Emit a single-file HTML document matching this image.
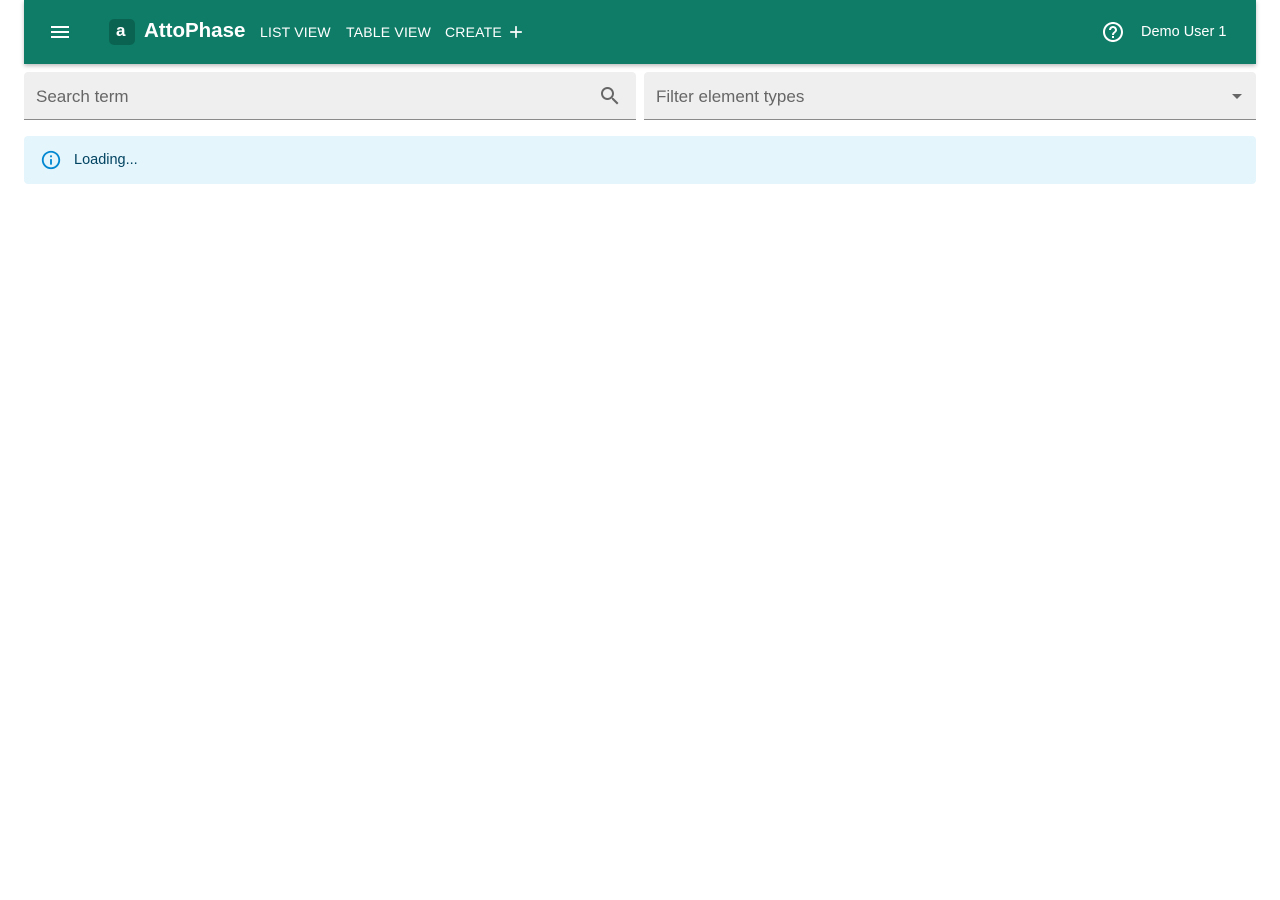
<!DOCTYPE html>
<html><head><style>
body{margin:0;background:#fff;font-family:"Liberation Sans",sans-serif;}
.bar{position:absolute;left:24px;top:0;width:1232px;height:64px;background:#0e7c67;box-shadow:0 2px 4px rgba(0,0,0,.25);color:#fff;}
.bar *{position:absolute}
.nav{font-size:14px;font-weight:500;top:24px;letter-spacing:.2px}
.field{position:absolute;top:72px;height:47px;background:#efefef;border-bottom:1px solid #8a8a8a;border-radius:4px 4px 0 0;width:612px}
.field span{position:absolute;left:12px;top:15px;font-size:17px;color:#666}
.alert{position:absolute;left:24px;top:136px;width:1232px;height:48px;background:#e4f5fc;border-radius:4px}
</style></head><body>
<div class="bar">
<svg style="left:24px;top:20px" width="24" height="24" viewBox="0 0 24 24"><path d="M3 18h18v-2H3v2zm0-5h18v-2H3v2zm0-7v2h18V6H3z" fill="#fff"/></svg>
<div style="left:85px;top:19px;width:26px;height:26px;border-radius:5px;background:#0a6350"></div>
<div style="left:92px;top:21px;font-size:17px;font-weight:bold">a</div>
<div style="left:120px;top:19px;font-size:20.5px;font-weight:bold">AttoPhase</div>
<div class="nav" style="left:236px">LIST VIEW</div>
<div class="nav" style="left:322px">TABLE VIEW</div>
<div class="nav" style="left:421px">CREATE</div>
<svg style="left:482px;top:22px" width="20" height="20" viewBox="0 0 24 24"><path d="M19 13h-6v6h-2v-6H5v-2h6V5h2v6h6v2z" fill="#fff"/></svg>
<svg style="left:1077px;top:20px" width="24" height="24" viewBox="0 0 24 24"><path d="M11 18h2v-2h-2v2zm1-16C6.48 2 2 6.48 2 12s4.48 10 10 10 10-4.48 10-10S17.52 2 12 2zm0 18c-4.41 0-8-3.59-8-8s3.59-8 8-8 8 3.59 8 8-3.59 8-8 8zm0-14c-2.21 0-4 1.79-4 4h2c0-1.1.9-2 2-2s2 .9 2 2c0 2-3 1.75-3 5h2c0-2.25 3-2.5 3-5 0-2.21-1.79-4-4-4z" fill="#fff"/></svg>
<div style="left:1117px;top:24px;font-size:14.5px">Demo User 1</div>
</div>
<div class="field" style="left:24px"><span>Search term</span>
<svg style="position:absolute;left:574px;top:12px" width="24" height="24" viewBox="0 0 24 24"><path d="M15.5 14h-.79l-.28-.27C15.41 12.59 16 11.11 16 9.5 16 5.91 13.09 3 9.5 3S3 5.910 3 9.5 5.91 16 9.5 16c1.61 0 3.09-.59 4.230-1.57l.27.28v.79l5 4.99L20.49 19l-4.99-5zm-6 0C7.01 14 5 11.99 5 9.5S7.01 5 9.5 5 14 7.01 14 9.5 11.99 14 9.5 14z" fill="#666"/></svg></div>
<div class="field" style="left:644px"><span>Filter element types</span>
<svg style="position:absolute;left:581px;top:12px" width="24" height="24" viewBox="0 0 24 24"><path d="M7 10l5 5 5-5z" fill="#666"/></svg></div>
<div class="alert">
<svg style="position:absolute;left:16px;top:13px" width="22" height="22" viewBox="0 0 24 24"><path d="M11 7h2v2h-2zm0 4h2v6h-2zm1-9C6.48 2 2 6.48 2 12s4.48 10 10 10 10-4.48 10-10S17.52 2 12 2zm0 18c-4.41 0-8-3.59-8-8s3.59-8 8-8 8 3.59 8 8-3.59 8-8 8z" fill="#0288d1"/></svg>
<div style="position:absolute;left:50px;top:16px;font-size:14.5px;color:#014361">Loading...</div>
</div>
</body></html>
